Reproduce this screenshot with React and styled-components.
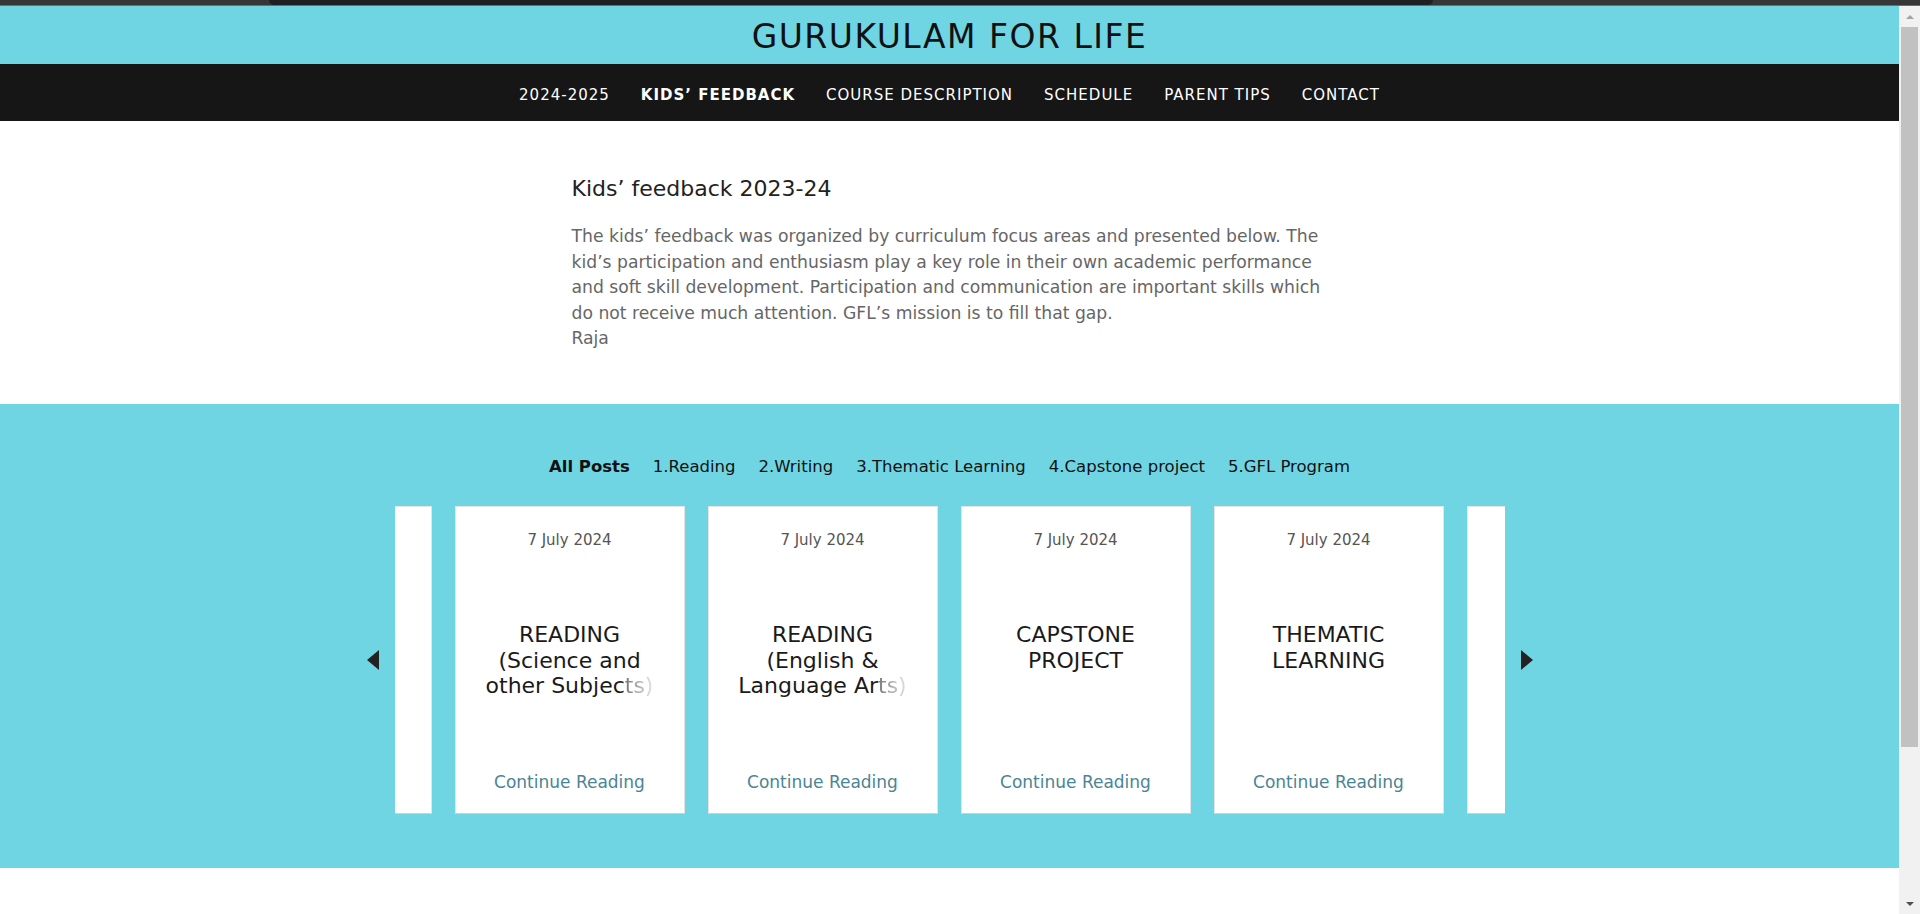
import styled, { createGlobalStyle } from "styled-components";

// Global
const GlobalStyle = createGlobalStyle`
  * {
    box-sizing: border-box;
  }

  html,
  body {
    margin: 0;
    padding: 0;
    height: 914px;
    overflow: hidden;
    background-color: #fff;
    font-family: "DejaVu Sans", "Open Sans", sans-serif;
  }
`;

// Browser frame
const Frame = styled.div`
  display: flex;
  flex-direction: column;
  height: 914px;
`;

const BrowserStrip = styled.div`
  height: 6px;
  flex-shrink: 0;
  padding-left: 269px;
  background-color: #363636;
  border-bottom: 1px solid #6c6c6c;
`;

const BrowserTab = styled.div`
  width: 1164px;
  height: 5px;
  background-color: #1f2023;
  border-radius: 0 0 10px 10px;
`;

const Window = styled.div`
  flex: 1;
  display: flex;
  min-height: 0;
`;

const Page = styled.main`
  flex: 1;
  min-width: 0;
  overflow: hidden;
  background-color: #fff;
`;

// Scrollbar
const Scrollbar = styled.div`
  width: 21px;
  flex-shrink: 0;
  display: flex;
  flex-direction: column;
  align-items: center;
  background-color: #f1f1f1;
`;

const ScrollButton = styled.div`
  height: 21px;
  width: 100%;
  display: flex;
  align-items: center;
  justify-content: center;
  margin-top: ${(p) => (p.$down ? "auto" : "0")};
`;

const ScrollArrow = styled.span`
  width: 0;
  height: 0;
  border-left: 4px solid transparent;
  border-right: 4px solid transparent;
  ${(p) =>
    p.$down
      ? "border-top: 4px solid #505050;"
      : "border-bottom: 4px solid #a3a3a3;"}
`;

const ScrollThumb = styled.div`
  width: 17px;
  height: 720px;
  background-color: #c1c1c1;
`;

// Header + nav
const Header = styled.header`
  height: 58px;
  padding-top: 2px;
  display: flex;
  align-items: center;
  justify-content: center;
  background-color: #6fd5e3;
`;

const SiteTitle = styled.h1`
  margin: 0;
  font-size: 33px;
  font-weight: 400;
  letter-spacing: 1.5px;
  color: #111;
`;

const Nav = styled.nav`
  height: 57px;
  padding-top: 4px;
  display: flex;
  align-items: center;
  justify-content: center;
  gap: 31px;
  background-color: #161616;
`;

const NavLink = styled.a`
  font-size: 15px;
  letter-spacing: 1px;
  text-transform: uppercase;
  text-decoration: none;
  color: #fff;
  font-weight: ${(p) => (p.$active ? 700 : 400)};
`;

// Intro
const Intro = styled.section`
  height: 283px;
  padding-top: 53px;
`;

const IntroInner = styled.div`
  width: 756px;
  margin: 0 auto;
`;

const IntroTitle = styled.h2`
  margin: 0;
  font-size: 22px;
  line-height: 30px;
  font-weight: 400;
  color: #222;
`;

const IntroText = styled.p`
  width: 772px;
  margin: 20px 0 0;
  font-size: 17.2px;
  line-height: 25.5px;
  color: #666;
`;

// Posts
const Posts = styled.section`
  padding: 51px 0 54px;
  background-color: #6fd5e3;
`;

const Filters = styled.div`
  display: flex;
  justify-content: center;
  gap: 23px;
  margin-bottom: 27px;
`;

const FilterLink = styled.a`
  font-size: 16.5px;
  line-height: 24px;
  color: #111;
  text-decoration: none;
  font-weight: ${(p) => (p.$active ? 700 : 400)};
`;

const Carousel = styled.div`
  display: flex;
  align-items: center;
  justify-content: center;
  gap: 16px;
`;

const ArrowButton = styled.button`
  width: 12px;
  height: 20px;
  padding: 0;
  border: none;
  background: none;
  cursor: pointer;

  &::before {
    content: "";
    display: block;
    width: 0;
    height: 0;
    border-top: 10px solid transparent;
    border-bottom: 10px solid transparent;
    ${(p) =>
      p.$next
        ? "border-left: 12px solid #222;"
        : "border-right: 12px solid #222;"}
  }
`;

const Viewport = styled.div`
  width: 1110px;
  overflow: hidden;
`;

const Track = styled.div`
  display: flex;
  gap: 23px;
  margin-left: -193px;
`;

const Card = styled.article`
  width: 230px;
  height: 308px;
  flex-shrink: 0;
  display: flex;
  flex-direction: column;
  align-items: center;
  padding: 23px 16px 20px;
  text-align: center;
  background-color: #fff;
  border: 1px solid #e4e4e4;
  border-bottom-color: #d0d0d0;
`;

const CardDate = styled.div`
  font-size: 15px;
  line-height: 20px;
  color: #555;
`;

const CardTitle = styled.h3`
  margin: 72px 0 0;
  font-size: 22px;
  line-height: 25.5px;
  font-weight: 400;
  color: #1a1a1a;
`;

const FadeTail = styled.span`
  background: linear-gradient(to right, #777, #e6e6e6);
  -webkit-background-clip: text;
  background-clip: text;
  color: transparent;
`;

const ReadMore = styled.a`
  margin-top: auto;
  font-size: 17px;
  line-height: 22px;
  color: #4a8594;
  text-decoration: none;
`;

const navItems = [
  "2024-2025",
  "Kids’ feedback",
  "Course description",
  "Schedule",
  "Parent tips",
  "Contact",
];

const filters = [
  "All Posts",
  "1.Reading",
  "2.Writing",
  "3.Thematic Learning",
  "4.Capstone project",
  "5.GFL Program",
];

const posts = [
  { id: 0, title: "GFL PROGRAM" },
  {
    id: 1,
    title: (
      <>
        READING (Science and other Subjec<FadeTail>ts)</FadeTail>
      </>
    ),
  },
  {
    id: 2,
    title: (
      <>
        READING (English &amp; Language Ar<FadeTail>ts)</FadeTail>
      </>
    ),
  },
  { id: 3, title: "CAPSTONE PROJECT" },
  { id: 4, title: "THEMATIC LEARNING" },
  { id: 5, title: "WRITING" },
];

const App = () => {
  return (
    <>
      <GlobalStyle />
      <Frame>
        <BrowserStrip>
          <BrowserTab />
        </BrowserStrip>
        <Window>
          <Page>
            <Header>
              <SiteTitle>GURUKULAM FOR LIFE</SiteTitle>
            </Header>
            <Nav>
              {navItems.map((item) => (
                <NavLink key={item} href="#" $active={item === "Kids’ feedback"}>
                  {item}
                </NavLink>
              ))}
            </Nav>

            <Intro>
              <IntroInner>
                <IntroTitle>Kids’ feedback 2023-24</IntroTitle>
                <IntroText>
                  The kids’ feedback was organized by curriculum focus areas and
                  presented below. The kid’s participation and enthusiasm play a
                  key role in their own academic performance and soft skill
                  development. Participation and communication are important
                  skills which do not receive much attention. GFL’s mission is to
                  fill that gap.
                  <br />
                  Raja
                </IntroText>
              </IntroInner>
            </Intro>

            <Posts>
              <Filters>
                {filters.map((f) => (
                  <FilterLink key={f} href="#" $active={f === "All Posts"}>
                    {f}
                  </FilterLink>
                ))}
              </Filters>
              <Carousel>
                <ArrowButton aria-label="Previous" />
                <Viewport>
                  <Track>
                    {posts.map((post) => (
                      <Card key={post.id}>
                        <CardDate>7 July 2024</CardDate>
                        <CardTitle>{post.title}</CardTitle>
                        <ReadMore href="#">Continue Reading</ReadMore>
                      </Card>
                    ))}
                  </Track>
                </Viewport>
                <ArrowButton $next aria-label="Next" />
              </Carousel>
            </Posts>
          </Page>
          <Scrollbar>
            <ScrollButton>
              <ScrollArrow />
            </ScrollButton>
            <ScrollThumb />
            <ScrollButton $down>
              <ScrollArrow $down />
            </ScrollButton>
          </Scrollbar>
        </Window>
      </Frame>
    </>
  );
};

export default App;
